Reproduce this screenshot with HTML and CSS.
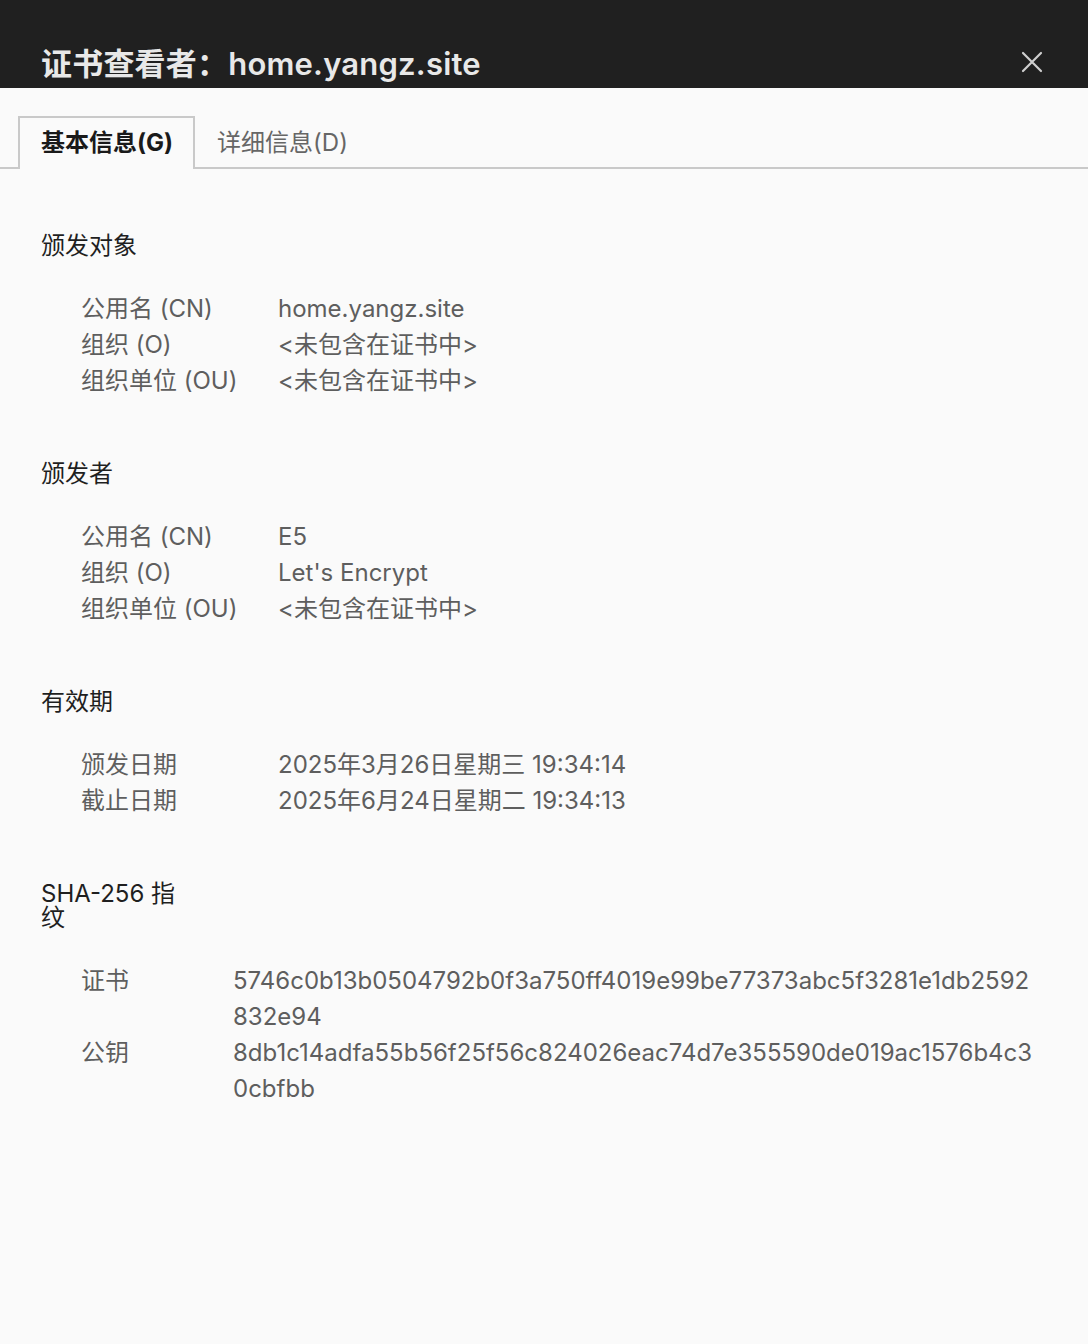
FILE: index.html
```html
<!DOCTYPE html>
<html lang="zh-CN">
<head>
  <meta charset="UTF-8" />
  <meta name="viewport" content="width=device-width, initial-scale=1" />
  <title>证书查看者</title>
  <link rel="stylesheet" href="styles.css">
</head>
<body>
  <header class="title-bar">
    <h1>证书查看者：home.yangz.site</h1>
    <button class="close-btn" aria-label="关闭">
      <svg width="22" height="22" viewBox="0 0 22 22">
        <path d="M2 2 L20 20 M20 2 L2 20" stroke="#cfcfcf" stroke-width="2.2" stroke-linecap="round" fill="none" />
      </svg>
    </button>
  </header>

  <nav class="tabs">
    <div class="tab active">基本信息(G)</div>
    <div class="tab">详细信息(D)</div>
  </nav>

  <main class="content">
    <section class="section">
      <h2>颁发对象</h2>
      <div class="rows">
        <div class="label">公用名 (CN)</div><div class="value">home.yangz.site</div>
        <div class="label">组织 (O)</div><div class="value">&lt;未包含在证书中&gt;</div>
        <div class="label">组织单位 (OU)</div><div class="value">&lt;未包含在证书中&gt;</div>
      </div>
    </section>

    <section class="section">
      <h2>颁发者</h2>
      <div class="rows">
        <div class="label">公用名 (CN)</div><div class="value">E5</div>
        <div class="label">组织 (O)</div><div class="value">Let's Encrypt</div>
        <div class="label">组织单位 (OU)</div><div class="value">&lt;未包含在证书中&gt;</div>
      </div>
    </section>

    <section class="section">
      <h2>有效期</h2>
      <div class="rows">
        <div class="label">颁发日期</div><div class="value">2025年3月26日星期三 19:34:14</div>
        <div class="label">截止日期</div><div class="value">2025年6月24日星期二 19:34:13</div>
      </div>
    </section>

    <section class="section">
      <h2 class="narrow">SHA-256 指纹</h2>
      <div class="rows fingerprint">
        <div class="label">证书</div><div class="value hash">5746c0b13b0504792b0f3a750ff4019e99be77373abc5f3281e1db2592832e94</div>
        <div class="label">公钥</div><div class="value hash">8db1c14adfa55b56f25f56c824026eac74d7e355590de019ac1576b4c30cbfbb</div>
      </div>
    </section>
  </main>
</body>
</html>
```

FILE: styles.css
```css
body {
  margin: 0;
  background: #fafafa;
  font-family: 'Inter', 'Noto Sans CJK SC', sans-serif;
  color: #1f1f1f;
  min-height: 100vh;
}

.title-bar {
  background: #202020;
  height: 88px;
  display: flex;
  align-items: flex-start;
  justify-content: space-between;
  padding: 0 45px 0 41px;
  overflow: hidden;
}
.title-bar h1 {
  margin: 44px 0 0;
  font-size: 31px;
  line-height: 40px;
  font-weight: 600;
  letter-spacing: 0.2px;
  color: #e8e8e8;
  white-space: nowrap;
}
.close-btn {
  background: none;
  border: none;
  padding: 0;
  margin-top: 51px;
  width: 22px;
  height: 22px;
  cursor: pointer;
}

.tabs {
  display: flex;
  align-items: flex-end;
  margin-top: 28px;
  padding-left: 18px;
  border-bottom: 2px solid #c9c9c9;
  height: 51px;
}
.tab {
  font-size: 24px;
  line-height: 50px;
  padding: 0 22px;
  color: #666;
  margin-bottom: -2px;
  height: 51px;
}
.tab.active {
  font-weight: 700;
  color: #1a1a1a;
  background: #fafafa;
  border: 2px solid #c9c9c9;
  border-bottom: none;
  padding: 0 20px 0 21px;
}

.content {
  padding: 2px 52px 60px 41px;
}
.section {
  margin-top: 63px;
}
.section h2 {
  margin: 0 0 33px;
  font-size: 24px;
  line-height: 24px;
  font-weight: 400;
  color: #1f1f1f;
}
.section h2.narrow {
  width: 150px;
}
.rows {
  display: grid;
  grid-template-columns: 197px 1fr;
  padding-left: 40px;
  font-size: 24px;
  line-height: 36px;
  color: #5e5e5e;
}
.rows.fingerprint {
  grid-template-columns: 152px 1fr;
}
.hash {
  word-break: break-all;
}
```
